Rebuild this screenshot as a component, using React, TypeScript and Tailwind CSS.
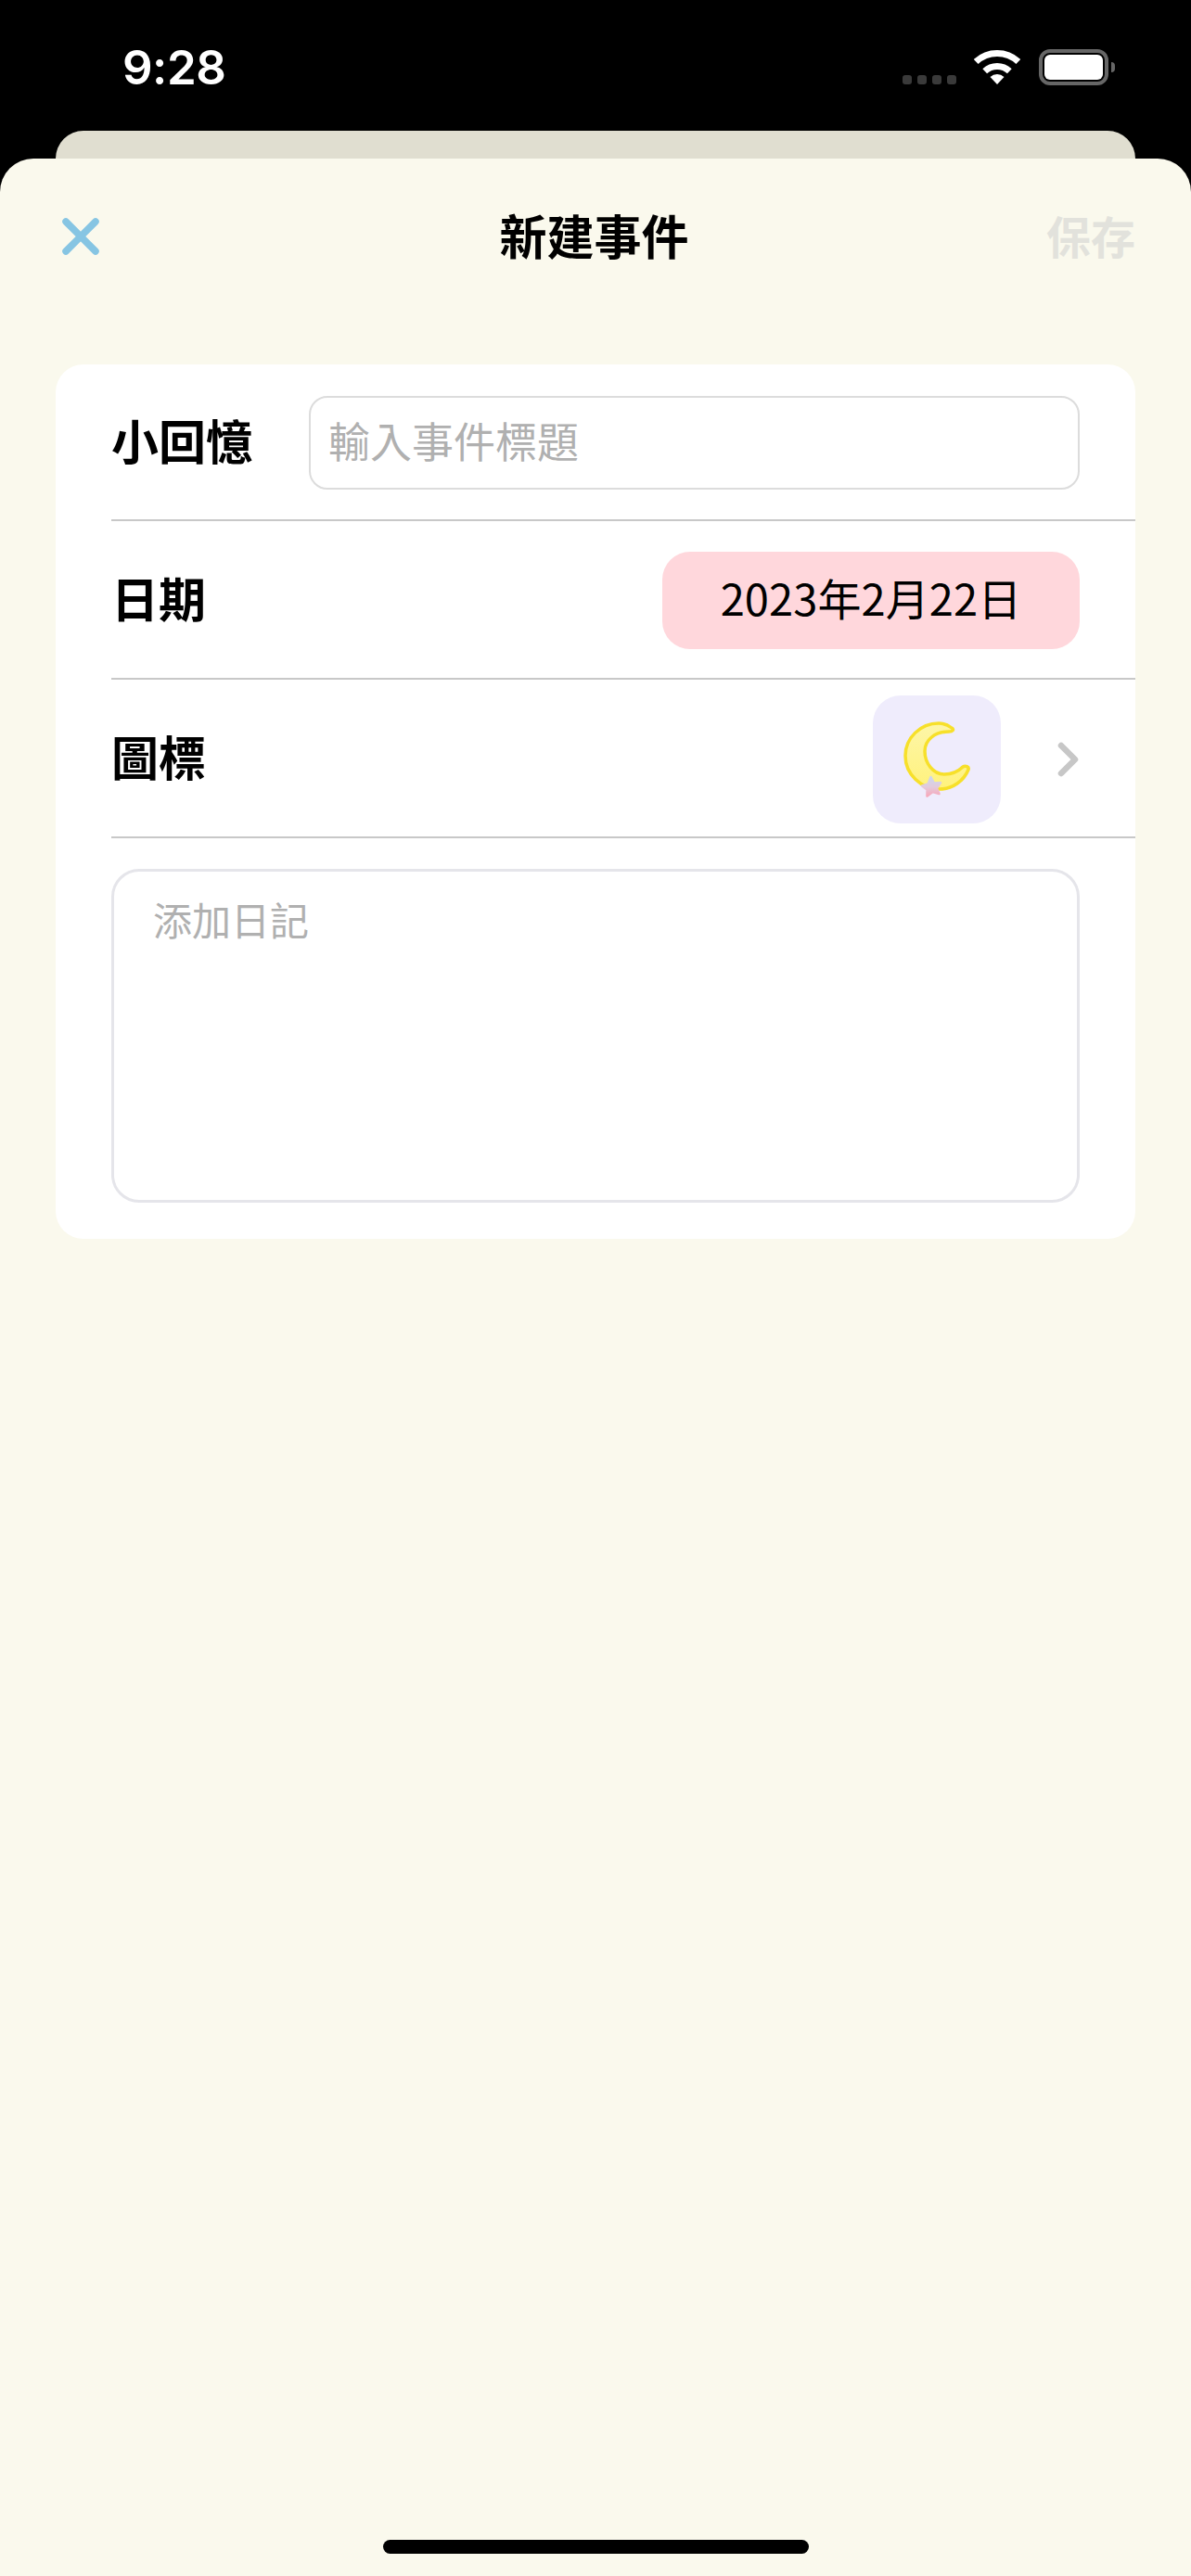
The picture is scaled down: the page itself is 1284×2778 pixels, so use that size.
const cjk = 'font-["Noto_Sans_CJK_TC","Noto_Sans_CJK_SC",sans-serif]';

function WifiIcon() {
  return (
    <svg width="50" height="37" viewBox="0 0 50 37" fill="none">
      <path d="M2.2 12.5A33.5 33.5 0 0 1 47.8 12.5" stroke="#fff" strokeWidth="7" />
      <path d="M11.7 22.7A19.5 19.5 0 0 1 38.3 22.7" stroke="#fff" strokeWidth="7" />
      <path d="M25 37L17.5 29A11 11 0 0 1 32.5 29Z" fill="#fff" />
    </svg>
  );
}

function Battery() {
  return (
    <div className="flex items-center">
      <div className="flex h-[39px] w-[75px] items-center justify-center rounded-[12px] border-[4px] border-[#666666]">
        <div className="h-[27px] w-[63px] rounded-[6px] bg-white" />
      </div>
      <div className="ml-[3px] h-[11px] w-[4px] rounded-r-full bg-[#666666]" />
    </div>
  );
}

function StatusBar() {
  return (
    <div className="flex h-[141px] items-start justify-between bg-black pt-[47px] pl-[132px] pr-[82px]">
      <span className="font-['Inter',sans-serif] text-[51px] leading-[52px] font-semibold tracking-[-0.5px] text-white">
        9:28
      </span>
      <div className="flex items-start pt-[6px]">
        <div className="mt-[28px] mr-[19px] flex gap-[6px]">
          <div className="h-[10px] w-[10px] rounded-[3px] bg-[#3a3a3a]" />
          <div className="h-[10px] w-[10px] rounded-[3px] bg-[#3a3a3a]" />
          <div className="h-[10px] w-[10px] rounded-[3px] bg-[#3a3a3a]" />
          <div className="h-[10px] w-[10px] rounded-[3px] bg-[#3a3a3a]" />
        </div>
        <div className="mt-px mr-[20px]">
          <WifiIcon />
        </div>
        <Battery />
      </div>
    </div>
  );
}

function MoonIcon() {
  return (
    <svg width="138" height="138" viewBox="0 0 138 138">
      <defs>
        <linearGradient id="moonFill" x1="0" y1="0" x2="0" y2="1">
          <stop offset="0" stopColor="#fdf6a8" />
          <stop offset="1" stopColor="#fff27c" />
        </linearGradient>
        <linearGradient id="starFill" x1="0" y1="0" x2="0" y2="1">
          <stop offset="0" stopColor="#ccd6ee" />
          <stop offset="0.5" stopColor="#e2cbdc" />
          <stop offset="1" stopColor="#f7a8ba" />
        </linearGradient>
      </defs>
      <path
        d="M85 35C80 31 76 30 71 30C51 30 35 46 35 65C35 85 52 101 72 101C86 101 98 92 103 80C104 77 100 75 97 77C92 82 85 85 77 85C65 85 56 73 56 60C56 48 67 39 82 39C86 39 88 37 85 35Z"
        fill="url(#moonFill)"
        stroke="#f7e02a"
        strokeWidth="3.5"
      />
      <path
        d="M62.5 88L66 94.5L73 94L69 100L71.5 106L64.5 104L58.5 108.5L58.5 101.5L53 97.5L59.5 95.5Z"
        fill="url(#starFill)"
        stroke="url(#starFill)"
        strokeWidth="2.5"
        strokeLinejoin="round"
      />
    </svg>
  );
}

export default function App() {
  return (
    <div className={`flex h-[2778px] w-[1284px] flex-col overflow-hidden bg-black ${cjk}`}>
      <StatusBar />
      <div className="mx-[60px] h-[30px] shrink-0 rounded-t-[30px] bg-[#e0ded0]" />
      <div className="flex flex-1 flex-col rounded-t-[36px] bg-[#faf9ed]">
        <div className="grid h-[168px] grid-cols-3 items-center pl-[67px] pr-[60px]">
          <svg width="40" height="40" viewBox="0 0 40 40" fill="none">
            <path d="M4 4L36 36M36 4L4 36" stroke="#86c5e3" strokeWidth="7.5" strokeLinecap="round" />
          </svg>
          <h1 className="mb-[5px] whitespace-nowrap pr-[10px] text-center text-[51px] leading-[60px] font-bold text-black">
            新建事件
          </h1>
          <button className="mb-[5px] justify-self-end text-[48px] leading-[60px] font-bold text-[#e2e2dc]">保存</button>
        </div>

        <div className="mx-[60px] mt-[54px] h-[943px] rounded-[30px] bg-white pl-[60px]">
          <div className="flex h-[169px] items-center border-b-2 border-[#c8c8c8] pt-[2px] pr-[60px]">
            <label className="mb-[7px] w-[213px] shrink-0 text-[51px] leading-[60px] font-bold text-black">小回憶</label>
            <input
              className="h-[101px] flex-1 rounded-[20px] border-2 border-[#dcdcdc] px-[19px] pb-[7px] text-[45px] outline-none placeholder:text-[#b0b0b0]"
              placeholder="輸入事件標題"
            />
          </div>
          <div className="flex h-[171px] items-center justify-between border-b-2 border-[#c8c8c8] pt-[2px] pr-[60px]">
            <span className="mb-[7px] text-[51px] leading-[60px] font-bold text-black">日期</span>
            <button className="flex h-[105px] w-[450px] items-center justify-center rounded-[30px] bg-[#ffd7dc] pb-[7px] text-[47px] tracking-[0.1px] text-black">
              2023年2月22日
            </button>
          </div>
          <div className="flex h-[171px] items-center border-b-2 border-[#c8c8c8] pt-[2px] pr-[60px]">
            <span className="mb-[7px] flex-1 text-[51px] leading-[60px] font-bold text-black">圖標</span>
            <div className="h-[138px] w-[138px] rounded-[30px] bg-[#efecfc]">
              <MoonIcon />
            </div>
            <svg className="ml-[61px]" width="24" height="38" viewBox="0 0 24 38" fill="none">
              <path d="M4 4L19 19L4 34" stroke="#c7c7c7" strokeWidth="6.5" strokeLinecap="round" strokeLinejoin="round" />
            </svg>
          </div>
          <div className="pt-[33px] pr-[60px]">
            <textarea
              className="block h-[360px] w-full resize-none rounded-[30px] border-[3px] border-[#e5e5ea] px-[42px] pt-[21px] text-[42px] leading-[60px] outline-none placeholder:text-[#b0b0b0]"
              placeholder="添加日記"
            />
          </div>
        </div>

        <div className="mt-auto mb-[24px] h-[15px] w-[459px] self-center rounded-full bg-black" />
      </div>
    </div>
  );
}
